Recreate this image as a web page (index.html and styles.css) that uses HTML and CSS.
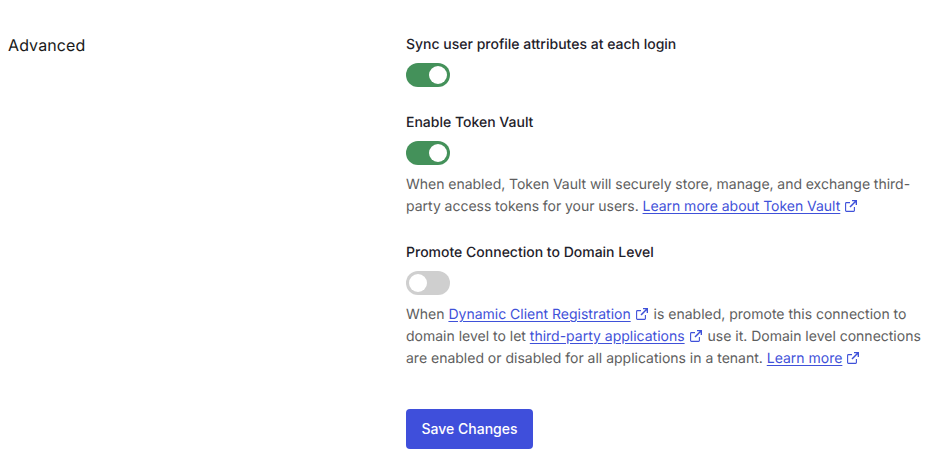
FILE: index.html
```html
<!DOCTYPE html>
<html lang="en">
<head>
<meta charset="utf-8">
<title>Advanced</title>
<link rel="stylesheet" href="styles.css">
</head>
<body>
<svg class="defs" width="0" height="0" aria-hidden="true">
  <symbol id="ext" viewBox="0 0 12 12">
    <path d="M5 2.6H1.4a.8.8 0 0 0-.8.8v7.2a.8.8 0 0 0 .8.8h7.2a.8.8 0 0 0 .8-.8V7" fill="none" stroke="currentColor" stroke-width="1.1"/>
    <path d="M7 .6h4.4V5M11.2.8 5 7" fill="none" stroke="currentColor" stroke-width="1.5"/>
  </symbol>
</svg>
<main class="page">
  <h2 class="heading">Advanced</h2>
  <form class="fields">
    <div class="field">
      <div class="label">Sync user profile attributes at each login</div>
      <span class="toggle on"><span class="knob"></span></span>
    </div>
    <div class="field">
      <div class="label">Enable Token Vault</div>
      <span class="toggle on"><span class="knob"></span></span>
      <p class="desc tight">When enabled, Token Vault will securely store, manage, and exchange third-party access tokens for your users. <a href="#">Learn more about Token Vault</a><svg class="ext"><use href="#ext"/></svg></p>
    </div>
    <div class="field">
      <div class="label">Promote Connection to Domain Level</div>
      <span class="toggle"><span class="knob"></span></span>
      <p class="desc">When <a href="#">Dynamic Client Registration</a><svg class="ext"><use href="#ext"/></svg> is enabled, promote this connection to domain level to let <a href="#">third-party applications</a><svg class="ext"><use href="#ext"/></svg> use it. Domain level connections are enabled or disabled for all applications in a tenant. <a href="#">Learn more</a><svg class="ext"><use href="#ext"/></svg></p>
    </div>
    <button class="save" type="button">Save Changes</button>
  </form>
</main>
</body>
</html>
```
FILE: styles.css
```css
* { box-sizing: border-box; }
html, body { margin: 0; padding: 0; background: #fff; }
body { font-family: Inter, "Liberation Sans", sans-serif; color: #191919; overflow: hidden; text-rendering: geometricPrecision; }
.defs { display: block; height: 0; }
.page {
  display: grid;
  grid-template-columns: 398px 516px;
  padding: 34px 0 0 8px;
}
.heading { margin: -1px 0 0; font-size: 16px; line-height: 24px; font-weight: 400; letter-spacing: 0.1px; }
.fields { display: flex; flex-direction: column; gap: 25px; }
.field { display: flex; flex-direction: column; align-items: flex-start; }
.label { font-size: 14px; line-height: 22px; font-weight: 500; color: #1e212a; margin-bottom: 7px; }
.toggle {
  display: flex;
  align-items: center;
  width: 44px;
  height: 24px;
  padding: 0 3px;
  border-radius: 12px;
  background: #cfcfcf;
}
.toggle.on { background: #44915a; justify-content: flex-end; }
.knob { width: 18px; height: 18px; border-radius: 50%; background: #fff; }
.desc { margin: 9px 0 -1px; font-size: 14px; line-height: 22px; color: #5e5e5e; word-spacing: -0.03px; }
.desc.tight { word-spacing: -0.2px; }
.desc a { color: #3f51d9; text-decoration: underline; text-underline-offset: 2px; }
.ext { display: inline-block; width: 12px; height: 12px; margin: 0 2px 0 5px; vertical-align: -1px; color: #3f51d9; }
.save {
  align-self: flex-start;
  width: 127px;
  height: 40px;
  margin-top: 15px;
  border: 0;
  border-radius: 4px;
  background: #3f4fdb;
  color: #fff;
  font: 500 14px/20px Inter, "Liberation Sans", sans-serif;
}
```
